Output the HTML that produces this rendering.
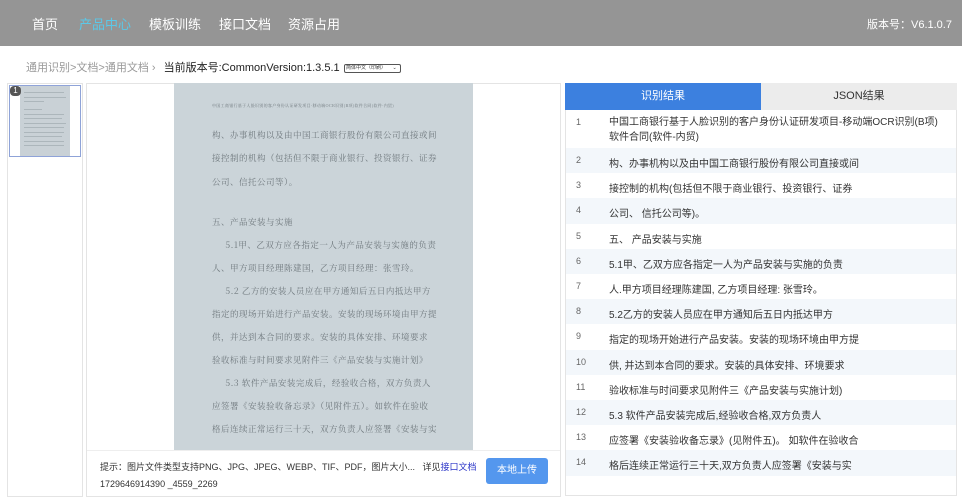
<!DOCTYPE html>
<html><head><meta charset="utf-8"><style>
*{margin:0;padding:0;box-sizing:border-box}
body{width:962px;height:500px;overflow:hidden;background:#fff;font-family:"Liberation Sans","Noto Sans CJK SC",sans-serif;position:relative}
.nav{position:absolute;left:0;top:0;width:962px;height:46px;background:#959595;color:#fff;font-size:13px}
.nav span{position:absolute;top:14px}
.bc{position:absolute;left:26px;top:59px;font-size:11px;color:#999}
.bc b{font-weight:normal;color:#222;margin-left:8px}
.sel{display:inline-block;width:57px;height:9px;border:1px solid #555;border-radius:2px;vertical-align:middle;margin-left:4px;font-size:5px;line-height:7px;color:#333;position:relative}
.box{position:absolute;border:1px solid #e4e4e4}
.doc{position:absolute;left:174px;top:83px;width:299px;height:367px;background:#cbd4d9;overflow:hidden;font-family:"Noto Serif CJK SC",serif;color:#6f787d;font-size:8.5px;letter-spacing:0.5px}
.doc div{position:absolute;left:38px;white-space:nowrap}
.tab{position:absolute;top:83px;height:27px;font-size:11px;text-align:center;line-height:27px}
.row{position:absolute;left:566px;width:390px;height:25.2px;font-size:10px;color:#333}
.row i{font-style:normal;position:absolute;left:10px;top:7px;font-size:9px;color:#666}
.row span{position:absolute;left:43px;top:7px;white-space:nowrap}
.alt{background:#f3f7fb}
.th div{position:absolute;left:4px;height:1px;background:#9aa3a8;opacity:.6}
</style></head><body>
<div class="nav">
<span style="left:32px">首页</span><span style="left:79px;color:#5bc8e8">产品中心</span><span style="left:149px">模板训练</span><span style="left:219px">接口文档</span><span style="left:288px">资源占用</span>
<span style="left:867px;font-size:11px;top:16px">版本号：V6.1.0.7</span>
</div>
<div class="bc">通用识别>文档>通用文档 ›<b>当前版本号:CommonVersion:1.3.5.1</b><span class="sel">&nbsp;简体中文（印刷）<span style="position:absolute;right:3px">⌄</span></span></div>
<div class="box" style="left:7px;top:83px;width:76px;height:414px"></div>
<div style="position:absolute;left:9px;top:85px;width:72px;height:72px;border:1px solid #8fa3d8"></div>
<div class="th" style="position:absolute;left:20px;top:86px;width:50px;height:70px;background:#c9d1d6">
<div style="top:6px;width:40px"></div><div style="top:11px;width:42px"></div><div style="top:15px;width:20px"></div><div style="top:23px;width:18px"></div><div style="top:28px;width:40px"></div><div style="top:32px;width:38px"></div><div style="top:37px;width:42px"></div><div style="top:41px;width:40px"></div><div style="top:46px;width:40px"></div><div style="top:50px;width:38px"></div><div style="top:55px;width:40px"></div><div style="top:59px;width:40px"></div>
</div>
<div style="position:absolute;left:10px;top:86px;width:11px;height:10px;border-radius:4px;background:#555;color:#fff;font-size:8px;text-align:center;line-height:10px">1</div>
<div class="box" style="left:86px;top:83px;width:475px;height:414px"></div>
<div class="doc">
<div style="top:20px;font-size:4px;letter-spacing:.3px">中国工商银行基于人脸识别的客户身份认证研发项目-移动端OCR识别(B项)软件合同(软件-内贸)</div>
<div style="top:46px">构、办事机构以及由中国工商银行股份有限公司直接或间</div>
<div style="top:69px">接控制的机构（包括但不限于商业银行、投资银行、证券</div>
<div style="top:93px">公司、信托公司等）。</div>
<div style="top:133px">五、产品安装与实施</div>
<div style="top:156px">&nbsp;&nbsp;&nbsp;&nbsp;&nbsp;5.1甲、乙双方应各指定一人为产品安装与实施的负责</div>
<div style="top:179px">人、甲方项目经理陈建国，乙方项目经理：张雪玲。</div>
<div style="top:202px">&nbsp;&nbsp;&nbsp;&nbsp;&nbsp;5.2 乙方的安装人员应在甲方通知后五日内抵达甲方</div>
<div style="top:225px">指定的现场开始进行产品安装。安装的现场环境由甲方提</div>
<div style="top:248px">供，并达到本合同的要求。安装的具体安排、环境要求</div>
<div style="top:271px">验收标准与时间要求见附件三《产品安装与实施计划》</div>
<div style="top:294px">&nbsp;&nbsp;&nbsp;&nbsp;&nbsp;5.3 软件产品安装完成后，经验收合格，双方负责人</div>
<div style="top:317px">应签署《安装验收备忘录》（见附件五）。如软件在验收</div>
<div style="top:340px">格后连续正常运行三十天，双方负责人应签署《安装与实</div>
</div>
<div style="position:absolute;left:87px;top:450px;width:473px;height:1px;background:#eee"></div>
<div style="position:absolute;left:100px;top:460px;font-size:9px;color:#333;white-space:nowrap">提示：图片文件类型支持PNG、JPG、JPEG、WEBP、TIF、PDF，图片大小...&nbsp;&nbsp;&nbsp;详见<span style="color:#2b35c8">接口文档</span></div>
<div style="position:absolute;left:100px;top:479px;font-size:9px;color:#333">1729646914390 _4559_2269</div>
<div style="position:absolute;left:486px;top:458px;width:62px;height:26px;background:#5497ee;border-radius:3px;color:#fff;font-size:10px;text-align:center;line-height:26px">本地上传</div>
<div class="box" style="left:565px;top:83px;width:392px;height:413px"></div>
<div class="tab" style="left:565px;width:196px;background:#3c80df;color:#fff">识别结果</div>
<div class="tab" style="left:761px;width:196px;background:#ececec;color:#333">JSON结果</div>
<div class="row" style="top:110px;height:38px"><i>1</i><span style="line-height:15px;top:5px">中国工商银行基于人脸识别的客户身份认证研发项目-移动端OCR识别(B项)<br>软件合同(软件-内贸)</span></div>
<div class="row alt" style="top:148px"><i>2</i><span>构、办事机构以及由中国工商银行股份有限公司直接或间</span></div>
<div class="row" style="top:173.2px"><i>3</i><span>接控制的机构(包括但不限于商业银行、投资银行、证券</span></div>
<div class="row alt" style="top:198.4px"><i>4</i><span>公司、 信托公司等)。</span></div>
<div class="row" style="top:223.6px"><i>5</i><span>五、 产品安装与实施</span></div>
<div class="row alt" style="top:248.8px"><i>6</i><span>5.1甲、乙双方应各指定一人为产品安装与实施的负责</span></div>
<div class="row" style="top:274px"><i>7</i><span>人.甲方项目经理陈建国, 乙方项目经理: 张雪玲。</span></div>
<div class="row alt" style="top:299.2px"><i>8</i><span>5.2乙方的安装人员应在甲方通知后五日内抵达甲方</span></div>
<div class="row" style="top:324.4px"><i>9</i><span>指定的现场开始进行产品安装。安装的现场环境由甲方提</span></div>
<div class="row alt" style="top:349.6px"><i>10</i><span>供, 并达到本合同的要求。安装的具体安排、环境要求</span></div>
<div class="row" style="top:374.8px"><i>11</i><span>验收标准与时间要求见附件三《产品安装与实施计划)</span></div>
<div class="row alt" style="top:400px"><i>12</i><span>5.3 软件产品安装完成后,经验收合格,双方负责人</span></div>
<div class="row" style="top:425.2px"><i>13</i><span>应签署《安装验收备忘录》(见附件五)。 如软件在验收合</span></div>
<div class="row alt" style="top:450.4px"><i>14</i><span>格后连续正常运行三十天,双方负责人应签署《安装与实</span></div>
</body></html>
